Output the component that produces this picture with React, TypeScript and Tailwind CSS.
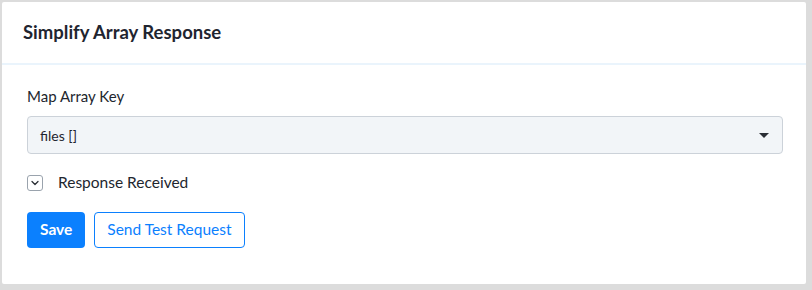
import { ChevronDown } from "lucide-react";

const App = () => {
  return (
    <div className="w-[812px] h-[290px] bg-[#dcdcdc] pt-[2px] pl-[2px] font-['Lato','Liberation_Sans',sans-serif]">
      <div className="w-[804px] h-[282px] bg-white rounded-[2px] flex flex-col">
        {/* Header */}
        <div className="h-[63px] flex items-center px-[21px] border-b-2 border-[#eaf4fc]">
          <h2 className="text-[18.5px] font-bold text-[#1f2530]">Simplify Array Response</h2>
        </div>

        {/* Body */}
        <div className="px-[25px] pt-[20px]">
          <label className="block text-[15px] leading-[22px] text-[#22262e] mb-[9px]">Map Array Key</label>
          <div className="h-[38px] w-[756px] rounded-[4px] border border-[#ccd2d9] bg-[#f2f5f8] flex items-center justify-between pl-[12px] pr-[13px]">
            <span className="text-[14px] text-[#1f2530]">files []</span>
            <span className="w-0 h-0 border-l-[5px] border-r-[5px] border-t-[5px] border-l-transparent border-r-transparent border-t-[#2a2e35]" />
          </div>

          <div className="flex items-center mt-[18px] h-[22px]">
            <span className="w-[16px] h-[16px] rounded-[3px] border border-[#9aa3ad] flex items-center justify-center">
              <ChevronDown size={12} strokeWidth={2.5} className="text-[#2a2e35]" />
            </span>
            <span className="ml-[15px] text-[15.5px] text-[#22262e]">Response Received</span>
          </div>

          <div className="flex items-center gap-[9px] mt-[18px]">
            <button className="h-[36px] px-[13px] rounded-[4px] bg-[#0b80fe] text-white text-[15.5px] font-bold">Save</button>
            <button className="h-[36px] px-[12px] rounded-[4px] border border-[#0b80fe] text-[#0b80fe] text-[15.5px] bg-white">Send Test Request</button>
          </div>
        </div>
      </div>
    </div>
  );
};

export default App;
